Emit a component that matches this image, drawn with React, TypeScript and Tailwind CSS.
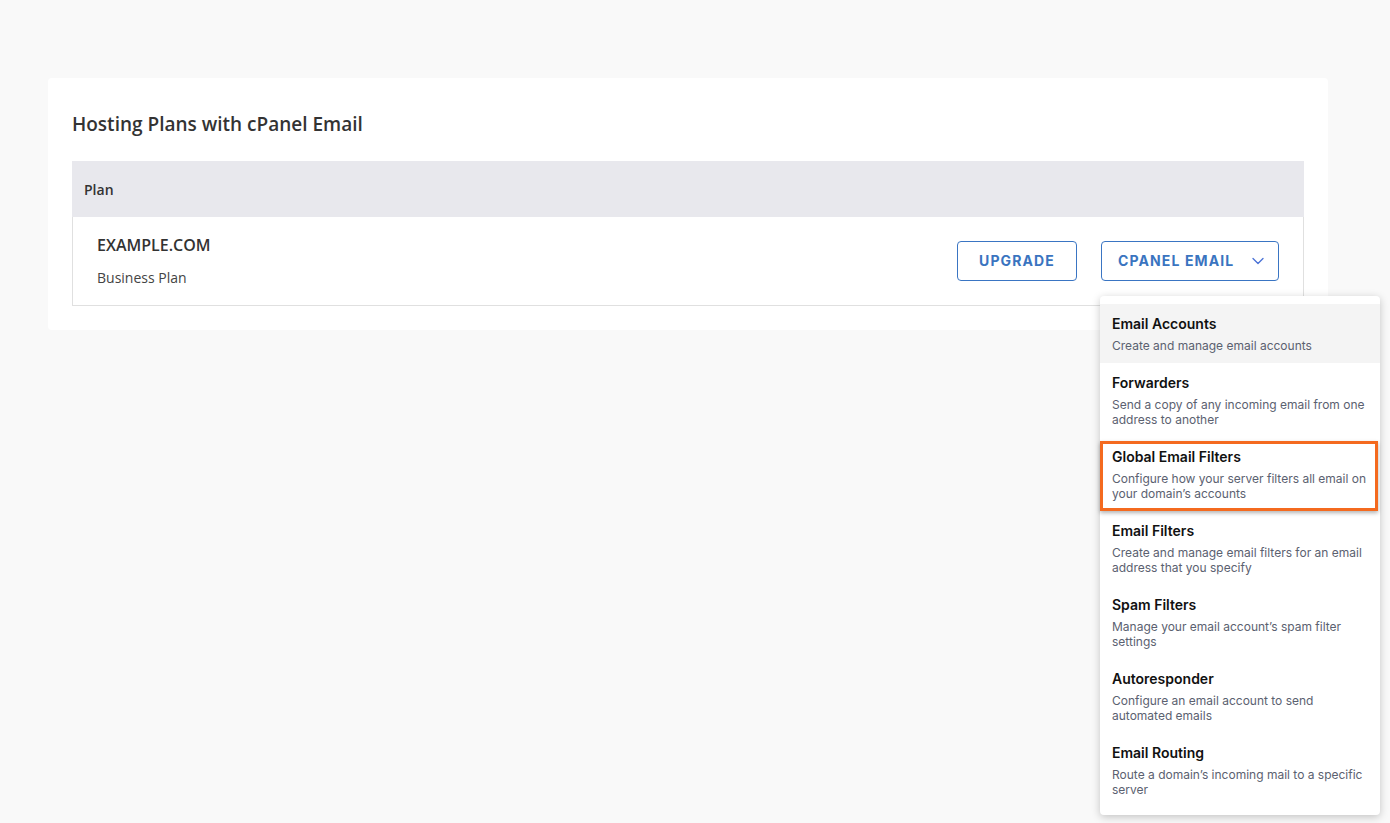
import React from 'react';
import { ChevronDown } from 'lucide-react';

type MenuItem = { title: string; desc: string; active?: boolean; marked?: boolean };

const items: MenuItem[] = [
  { title: 'Email Accounts', desc: 'Create and manage email accounts', active: true },
  { title: 'Forwarders', desc: 'Send a copy of any incoming email from one address to another' },
  { title: 'Global Email Filters', desc: 'Configure how your server filters all email on your domain’s accounts', marked: true },
  { title: 'Email Filters', desc: 'Create and manage email filters for an email address that you specify' },
  { title: 'Spam Filters', desc: 'Manage your email account’s spam filter settings' },
  { title: 'Autoresponder', desc: 'Configure an email account to send automated emails' },
  { title: 'Email Routing', desc: 'Route a domain’s incoming mail to a specific server' },
];

const App: React.FC = () => {
  return (
    <div className="min-h-[823px] w-full bg-[#f9f9f9] pt-[78px] font-['Open_Sans',sans-serif]">
      <div className="ml-[48px] w-[1280px] rounded bg-white px-6 pb-6 pt-8">
        <h2 className="text-[19px] font-semibold leading-7 text-[#333]">Hosting Plans with cPanel Email</h2>

        <div className="mt-[23px] border-x border-b border-[#e0e0e0]">
          <div className="-mx-px flex h-[56px] items-center bg-[#e8e8ed] px-3">
            <span className="text-[14px] font-semibold text-[#333]">Plan</span>
          </div>

          <div className="flex items-center justify-between pb-[17px] pl-6 pr-6 pt-4">
            <div>
              <div className="text-[16px] font-semibold leading-6 text-[#333]">EXAMPLE.COM</div>
              <div className="mt-[11px] text-[14px] leading-5 text-[#444]">Business Plan</div>
            </div>

            <div className="flex items-center gap-6 font-['Inter',sans-serif]">
              <button className="h-[40px] w-[120px] rounded border border-[#3a75c3] text-[14px] font-bold tracking-[0.08em] text-[#3a74c0]">
                UPGRADE
              </button>
              <div className="relative">
                <button className="flex h-[40px] w-[178px] items-center rounded border border-[#3a75c3] pl-4 pr-[10px] text-[14px] font-bold tracking-[0.08em] text-[#3a74c0]">
                  <span>CPANEL EMAIL</span>
                  <ChevronDown size={20} strokeWidth={1.6} className="ml-auto text-[#4a72d6]" />
                </button>

                <div className="absolute left-[-1px] top-[55px] z-10 w-[280px] rounded bg-white py-2 text-left tracking-normal shadow-[0_2px_8px_rgba(0,0,0,0.22)]">
                  {items.map((it) => (
                    <div
                      key={it.title}
                      className={`relative px-3 py-[10px] ${it.active ? 'bg-[#f4f4f4]' : ''}`}
                    >
                      <div className="text-[14px] font-semibold leading-5 text-[#111]">{it.title}</div>
                      <div className="mt-1 text-[12px] font-normal leading-[15px] text-[#5b6170]">{it.desc}</div>
                      {it.marked && (
                        <div className="pointer-events-none absolute bottom-0 left-0 right-[2px] top-[4px] border-[3px] border-[#f46a1f] shadow-[0_2px_4px_rgba(0,0,0,0.3)]" />
                      )}
                    </div>
                  ))}
                </div>
              </div>
            </div>
          </div>
        </div>
      </div>
    </div>
  );
};

export default App;
